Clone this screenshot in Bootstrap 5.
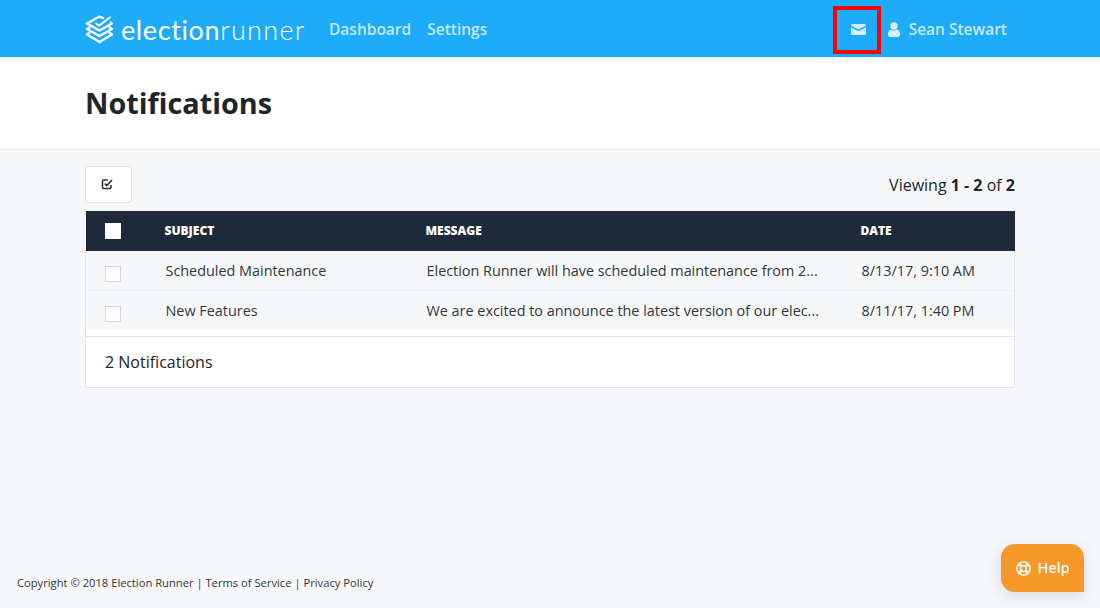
<!DOCTYPE html>
<html lang="en">
<head>
<meta charset="utf-8">
<title>Notifications</title>
<link href="https://cdn.jsdelivr.net/npm/bootstrap@5.3.0/dist/css/bootstrap.min.css" rel="stylesheet">
<style>
html,body{height:608px;overflow:hidden}
body{font-family:"Open Sans",sans-serif;background:#f6f7f9;color:#212529;font-size:16px;display:flex;flex-direction:column}
.er-wrap{width:930px;margin-left:85px}
.er-top{background:#1eabf9;height:57px;padding:2px 0 0}
.er-logo{font-family:Lato,sans-serif;color:#fff;font-size:27px;line-height:1;letter-spacing:.6px;gap:7px;width:244px}
.er-logo b{font-weight:400}
.er-logo i{font-style:normal;font-weight:300;letter-spacing:1.3px}
.er-link{color:#c4e8fd;font-size:15.5px;font-weight:600;text-decoration:none}
.er-mailbox{width:48px;height:48px;border:4px solid #f00;margin-right:7px;padding-left:3px}
.er-user{margin-right:9px}
.er-title{background:#fff;height:93px;border-bottom:1px solid #e2e4e9}
.er-title h1{font-size:28.8px;font-weight:700;margin:0;line-height:1;padding-top:32px;color:#212529}
.er-tool{width:47px;height:37px;background:#fff;border:1px solid #e0e2e8;border-radius:3px;padding:0 3px 2px 0}
.er-count{font-size:16px}
.er-table{table-layout:fixed;width:930px;margin:0;--bs-table-bg:transparent}
.er-table th{background:#1e2a3a;color:#fff;font-size:12px;font-weight:800;text-transform:uppercase;height:40px;padding:0;vertical-align:middle;border:0;line-height:1}
.er-table td{background:#f6f7f9;height:39px;padding:2px 0 0 1px;font-size:14.4px;color:#33373b;vertical-align:middle;border-bottom:1px solid #eceef2;white-space:nowrap}
.er-table tr:last-child td{border-bottom:0;height:40px}
.er-table th.er-c{padding:0 0 0 19px}
.er-table td.er-c{padding:2px 0 0 19px}
.er-table td:first-child{border-left:1px solid #e2e4e9}
.er-table td:last-child{border-right:1px solid #e2e4e9}
.er-box{display:block;width:16px;height:16px;background:#fff;border:1px solid #d5d8de;margin-top:6px}
.er-box-h{width:16px;height:16px;background:#fff;display:block}
.er-foot{background:#fff;height:58px;padding:6px 0 0 0;border:1px solid #e2e4e9;border-top:0}
.er-foot div{border-top:1px solid #e2e4e9;height:51px;margin:0 -1px;line-height:50px;font-size:16px;padding-left:20px}
.er-copy{font-size:11.2px;color:#33373b;margin-top:auto;padding:0 0 18px 17px;line-height:15px}
.er-copy a{color:inherit;text-decoration:none}
.er-help{position:fixed;left:1001px;top:544px;width:83px;height:48px;background:#f7982b;color:#fff;border:0;border-radius:14px 14px 0 14px;font-size:14.4px;font-weight:600;padding:0 0 0 1px;box-shadow:0 4px 14px rgba(60,80,110,.18);gap:6px}
</style>
</head>
<body>
<nav class="er-top d-flex align-items-center">
  <div class="er-wrap d-flex align-items-center">
    <div class="er-logo d-flex align-items-center">
      <svg width="29" height="29" viewBox="0 0 29 29" fill="none" stroke="#fff" stroke-width="2.400" stroke-linejoin="round" aria-hidden="true"><path d="M19 3.500 L14.500 1.500 L2 8.500 L14.500 15.500 L27 8.500 L25 7.400"/><path d="M5 12 L2 14 L14.500 21 L27 14 L24 12"/><path d="M5 17.500 L2 19.500 L14.500 27 L27 19.500 L24 17.500"/><path d="M10.500 8 l3.500 2.800 L25.500 2" stroke-width="2"/></svg>
      <span><b>election</b><i>runner</i></span>
    </div>
    <a class="er-link" href="#">Dashboard</a>
    <a class="er-link ms-3" href="#">Settings</a>
    <div class="er-mailbox d-flex align-items-center justify-content-center ms-auto">
      <svg width="15" height="11" viewBox="0 0 15 11" aria-hidden="true"><path fill="#d5effe" d="M0 1.500 Q0 0 1.500 0 H13.500 Q15 0 15 1.500 L7.500 5.500Z M0 3.200 L7.500 7.200 L15 3.200 V9.500 Q15 11 13.500 11 H1.500 Q0 11 0 9.500Z"/></svg>
    </div>
    <svg class="er-user" width="12" height="15" viewBox="0 0 12 15" aria-hidden="true"><circle cx="6" cy="4" r="3.700" fill="#d5effe"/><path fill="#d5effe" d="M0 12 Q0 8 3 7.500 Q6 9.500 9 7.500 Q12 8 12 12 Q12 15 10 15 H2 Q0 15 0 12Z"/></svg>
    <a class="er-link me-2" href="#">Sean Stewart</a>
  </div>
</nav>
<header class="er-title"><div class="er-wrap"><h1>Notifications</h1></div></header>
<main class="er-wrap">
  <div class="d-flex justify-content-between align-items-center" style="margin-top:16px;margin-bottom:8px">
    <button class="er-tool d-flex align-items-center justify-content-center" type="button" aria-label="Select">
      <svg width="12" height="12" viewBox="0 0 12 12" fill="none" stroke="#2a2f36" stroke-width="1.500" aria-hidden="true"><path d="M10 7 V9.500 Q10 10.500 9 10.500 H2.500 Q1.500 10.500 1.500 9.500 V3 Q1.500 2 2.500 2 H7"/><path d="M3.800 5.500 L5.800 7.500 L11 2" stroke-width="1.700"/></svg>
    </button>
    <div class="er-count">Viewing <strong>1 - 2</strong> of <strong>2</strong></div>
  </div>
  <table class="table er-table">
    <colgroup><col style="width:79px"><col style="width:261px"><col style="width:435px"><col></colgroup>
    <thead><tr><th class="er-c"><span class="er-box-h"></span></th><th>Subject</th><th>Message</th><th>Date</th></tr></thead>
    <tbody>
      <tr><td class="er-c"><span class="er-box"></span></td><td>Scheduled Maintenance</td><td>Election Runner will have scheduled maintenance from 2...</td><td>8/13/17, 9:10 AM</td></tr>
      <tr><td class="er-c"><span class="er-box"></span></td><td>New Features</td><td>We are excited to announce the latest version of our elec...</td><td>8/11/17, 1:40 PM</td></tr>
    </tbody>
  </table>
  <div class="er-foot"><div>2 Notifications</div></div>
</main>
<footer class="er-copy">Copyright © 2018 Election Runner | <a href="#">Terms of Service</a> | <a href="#">Privacy Policy</a></footer>
<button class="er-help d-flex align-items-center justify-content-center" type="button">
  <svg width="15" height="15" viewBox="0 0 15 15" fill="none" stroke="#fff" aria-hidden="true"><circle cx="7.500" cy="7.500" r="6.500" stroke-width="1.600"/><circle cx="7.500" cy="7.500" r="3" stroke-width="1.400"/><path d="M3 3 L5.300 5.300 M12 3 L9.700 5.300 M3 12 L5.300 9.700 M12 12 L9.700 9.700" stroke-width="2.200"/></svg>
  Help
</button>
<script src="https://cdn.jsdelivr.net/npm/bootstrap@5.3.0/dist/js/bootstrap.bundle.min.js"></script>
</body>
</html>
